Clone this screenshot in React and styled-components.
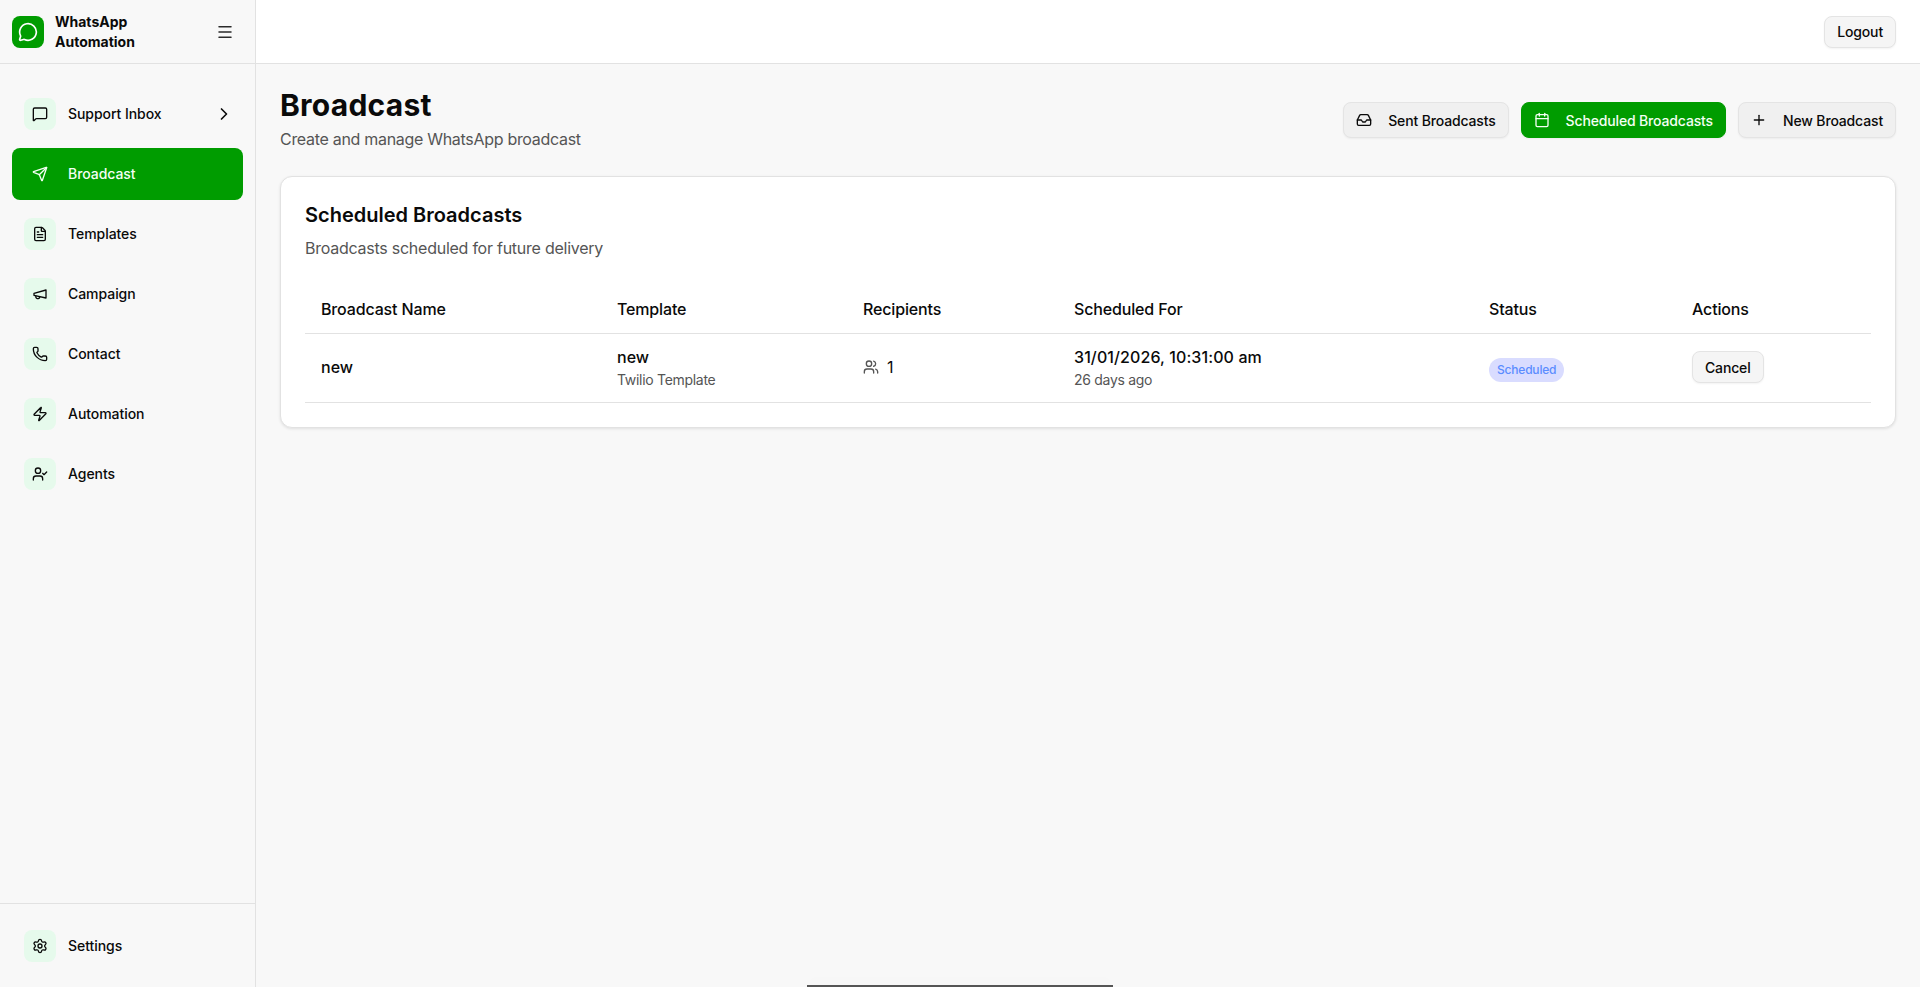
import React from 'react';
import styled, { createGlobalStyle } from 'styled-components';
import {
  Calendar,
  ChevronRight,
  FileText,
  Inbox,
  Menu,
  MessageCircle,
  MessageSquare,
  Phone,
  Plus,
  Send,
  Settings,
  UserCheck,
  Users,
  Zap,
} from 'lucide-react';

const GlobalStyle = createGlobalStyle`
    * { box-sizing : border-box; }
    html, body {
        margin : 0;
        height : 100%;
        overflow : hidden;
        font-family : Inter, "Liberation Sans", sans-serif;
        color : #0a0a0a;
        background : #f8f8f8;
    }
`;

const Shell = styled.div`
    display : flex;
    height : 100vh;
`;

const Sidebar = styled.aside`
    width : 256px;
    flex-shrink : 0;
    display : flex;
    flex-direction : column;
    background : #f8f8f8;
    border-right : 1px solid #e2e2e2;
`;

const Brand = styled.div`
    height : 64px;
    flex-shrink : 0;
    display : flex;
    align-items : center;
    justify-content : space-between;
    padding : 0 21px 0 12px;
    border-bottom : 1px solid #e2e2e2;
`;

const BrandLeft = styled.div`
    display : flex;
    align-items : center;
    gap : 11px;
`;

const Logo = styled.div`
    width : 32px;
    height : 32px;
    border-radius : 8px;
    background : #009c00;
    color : #fff;
    display : flex;
    align-items : center;
    justify-content : center;
`;

const BrandName = styled.div`
    font-size : 14px;
    line-height : 20px;
    font-weight : 700;
    width : 90px;
`;

const Nav = styled.nav`
    flex : 1;
    display : flex;
    flex-direction : column;
    gap : 8px;
    padding : 24px 12px;
`;

const NavItem = styled.div`
    height : 52px;
    display : flex;
    align-items : center;
    gap : 12px;
    padding : 0 12px;
    border-radius : 8px;
    font-size : 14px;
    font-weight : 500;
    letter-spacing : -0.05px;
    background : ${(props) => (props.$active ? '#009c00' : 'transparent')};
    color : ${(props) => (props.$active ? '#f4fff4' : '#0a0a0a')};
`;

const IconBox = styled.span`
    width : 32px;
    height : 32px;
    border-radius : 8px;
    display : flex;
    align-items : center;
    justify-content : center;
    background : ${(props) => (props.$active ? 'transparent' : '#e6faec')};
`;

const NavLabel = styled.span`
    flex : 1;
    padding-bottom : 1px;
`;

const Arrow = styled(ChevronRight)`
    margin-right : -3px;
`;

const SideFooter = styled.div`
    padding : 16px 12px 15px;
    border-top : 1px solid #e2e2e2;
`;

const Column = styled.div`
    flex : 1;
    min-width : 0;
    display : flex;
    flex-direction : column;
`;

const Topbar = styled.header`
    height : 64px;
    flex-shrink : 0;
    display : flex;
    align-items : center;
    justify-content : flex-end;
    padding : 0 24px;
    background : #fff;
    border-bottom : 1px solid #e2e2e2;
`;

const Button = styled.button`
    height : ${(props) => (props.$tall ? '36px' : '32px')};
    display : inline-flex;
    align-items : center;
    gap : 16px;
    padding : 0 12px;
    font-family : inherit;
    font-size : 14px;
    font-weight : 500;
    letter-spacing : -0.15px;
    border-radius : 8px;
    border : 1px solid ${(props) => (props.$primary ? '#009c00' : '#e4e4e4')};
    background : ${(props) => (props.$primary ? '#009c00' : props.$tall ? '#f0f0f0' : '#f5f5f5')};
    color : ${(props) => (props.$primary ? '#f4fff4' : '#0a0a0a')};
    box-shadow : 0 1px 2px rgba(0, 0, 0, 0.05);
`;

const Content = styled.main`
    flex : 1;
    padding : 24px;
`;

const PageHead = styled.div`
    display : flex;
    align-items : center;
    justify-content : space-between;
    margin-bottom : 24px;
`;

const HeadText = styled.div`
    padding-bottom : 1px;
`;

const Title = styled.h1`
    margin : 0 0 5px;
    font-size : 30px;
    line-height : 34px;
    font-weight : 700;
    letter-spacing : 0.25px;
`;

const Subtitle = styled.p`
    margin : 0;
    font-size : 16px;
    line-height : 24px;
    letter-spacing : -0.3px;
    color : #555;
`;

const Actions = styled.div`
    display : flex;
    gap : 12px;
`;

const Card = styled.section`
    background : #fff;
    border : 1px solid #e2e2e2;
    border-radius : 12px;
    padding : 24px;
    box-shadow : 0 1px 3px rgba(0, 0, 0, 0.1);
`;

const CardTitle = styled.h2`
    margin : 0 0 7px;
    font-size : 20px;
    line-height : 28px;
    font-weight : 600;
`;

const CardDesc = styled.p`
    margin : 0 0 25px;
    font-size : 16px;
    line-height : 24px;
    letter-spacing : -0.25px;
    color : #555;
`;

const Table = styled.table`
    width : 100%;
    table-layout : fixed;
    border-collapse : collapse;
`;

const Th = styled.th`
    height : 48px;
    padding : 0 16px;
    text-align : left;
    font-size : 16px;
    font-weight : 500;
    letter-spacing : -0.15px;
    border-bottom : 1px solid #e2e2e2;
`;

const Td = styled.td`
    padding : 11px 16px 12px;
    font-size : 16px;
    line-height : 24px;
    border-bottom : 1px solid #e2e2e2;
    vertical-align : middle;
`;

const StatusTd = styled(Td)`
    padding-top : 13px;
    padding-bottom : 10px;
`;

const Muted = styled.div`
    margin-top : 1px;
    font-size : 14px;
    line-height : 20px;
    letter-spacing : -0.3px;
    color : #555;
`;

const Strong = styled.span`
    font-weight : 500;
    letter-spacing : ${(props) => props.$spacing || 'normal'};
`;

const Recipients = styled.div`
    display : flex;
    align-items : center;
    gap : 8px;
`;

const Badge = styled.span`
    display : inline-flex;
    align-items : center;
    vertical-align : middle;
    height : 24px;
    padding : 0 8px;
    border-radius : 12px;
    font-size : 12px;
    font-weight : 500;
    letter-spacing : -0.2px;
    background : #d9dcff;
    color : #5b8cff;
`;

const BottomEdge = styled.div`
    position : fixed;
    left : 807px;
    bottom : 0;
    width : 306px;
    height : 2px;
    background : #555;
    box-shadow : 0 -4px 12px rgba(0, 0, 0, 0.04);
`;

// lucide dropped this shape in later versions, the reference still uses it
const Megaphone = ({ size }) => (
  <svg width={size} height={size} viewBox="0 0 24 24" fill="none" stroke="currentColor" strokeWidth="2" strokeLinecap="round" strokeLinejoin="round">
    <path d="m3 11 18-5v12L3 14v-3z" />
    <path d="M11.6 16.8a3 3 0 1 1-5.8-1.6" />
  </svg>
);

const navItems = [
  { label: 'Support Inbox', icon: MessageSquare, arrow: true },
  { label: 'Broadcast', icon: Send, active: true },
  { label: 'Templates', icon: FileText },
  { label: 'Campaign', icon: Megaphone },
  { label: 'Contact', icon: Phone },
  { label: 'Automation', icon: Zap },
  { label: 'Agents', icon: UserCheck },
];

const columns = [
  { label: 'Broadcast Name', width: 296 },
  { label: 'Template', width: 246 },
  { label: 'Recipients', width: 211 },
  { label: 'Scheduled For', width: 415 },
  { label: 'Status', width: 203 },
  { label: 'Actions', width: 195 },
];

const App = () => {
  return (
    <Shell>
      <GlobalStyle />
      <Sidebar>
        <Brand>
          <BrandLeft>
            <Logo><MessageCircle size={20} /></Logo>
            <BrandName>WhatsApp Automation</BrandName>
          </BrandLeft>
          <Menu size={18} color="#2a2a2a" />
        </Brand>
        <Nav>
          {navItems.map((item) => (
            <NavItem key={item.label} $active={item.active}>
              <IconBox $active={item.active}><item.icon size={16} /></IconBox>
              <NavLabel>{item.label}</NavLabel>
              {item.arrow && <Arrow size={20} />}
            </NavItem>
          ))}
        </Nav>
        <SideFooter>
          <NavItem>
            <IconBox><Settings size={16} /></IconBox>
            <NavLabel>Settings</NavLabel>
          </NavItem>
        </SideFooter>
      </Sidebar>
      <Column>
        <Topbar>
          <Button>Logout</Button>
        </Topbar>
        <Content>
          <PageHead>
            <HeadText>
              <Title>Broadcast</Title>
              <Subtitle>Create and manage WhatsApp broadcast</Subtitle>
            </HeadText>
            <Actions>
              <Button $tall><Inbox size={16} />Sent Broadcasts</Button>
              <Button $tall $primary><Calendar size={16} />Scheduled Broadcasts</Button>
              <Button $tall><Plus size={16} />New Broadcast</Button>
            </Actions>
          </PageHead>
          <Card>
            <CardTitle>Scheduled Broadcasts</CardTitle>
            <CardDesc>Broadcasts scheduled for future delivery</CardDesc>
            <Table>
              <colgroup>
                {columns.map((col) => <col key={col.label} width={col.width} />)}
              </colgroup>
              <thead>
                <tr>
                  {columns.map((col) => <Th key={col.label}>{col.label}</Th>)}
                </tr>
              </thead>
              <tbody>
                <tr>
                  <Td><Strong>new</Strong></Td>
                  <Td>
                    <Strong>new</Strong>
                    <Muted>Twilio Template</Muted>
                  </Td>
                  <Td>
                    <Recipients><Users size={16} color="#555" />1</Recipients>
                  </Td>
                  <Td>
                    <Strong $spacing="0.1px">31/01/2026, 10:31:00 am</Strong>
                    <Muted>26 days ago</Muted>
                  </Td>
                  <StatusTd><Badge>Scheduled</Badge></StatusTd>
                  <Td><Button>Cancel</Button></Td>
                </tr>
              </tbody>
            </Table>
          </Card>
        </Content>
      </Column>
      <BottomEdge />
    </Shell>
  );
};

export default App;
